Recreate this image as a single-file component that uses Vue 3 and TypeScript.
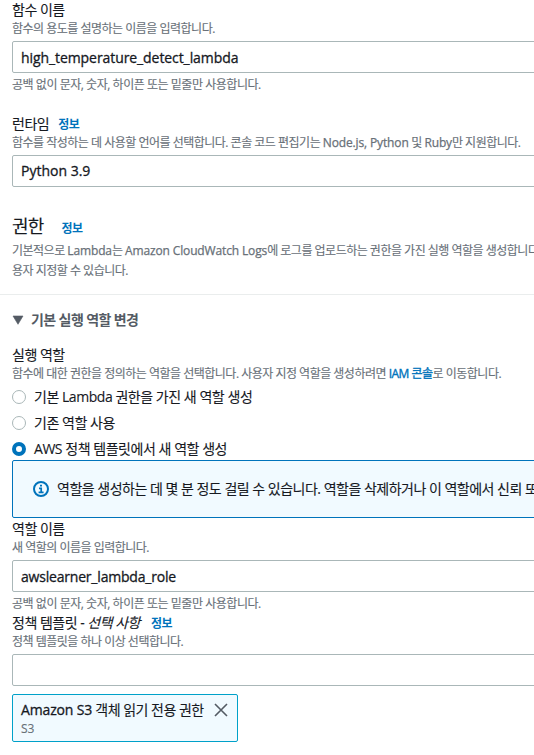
<script setup lang="ts">
import { ref } from 'vue'

interface RoleOption {
  id: string
  label: string
}

const functionName = ref('high_temperature_detect_lambda')
const runtime = ref('Python 3.9')
const roleName = ref('awslearner_lambda_role')
const selectedRole = ref('template')

const roleOptions: RoleOption[] = [
  { id: 'basic', label: '기본 Lambda 권한을 가진 새 역할 생성' },
  { id: 'existing', label: '기존 역할 사용' },
  { id: 'template', label: 'AWS 정책 템플릿에서 새 역할 생성' },
]
</script>

<template>
  <main class="page">
    <div class="form">
      <section class="field">
        <div class="label">함수 이름</div>
        <p class="hint">함수의 용도를 설명하는 이름을 입력합니다.</p>
        <div class="control name">{{ functionName }}</div>
        <p class="hint constraint">공백 없이 문자, 숫자, 하이픈 또는 밑줄만 사용합니다.</p>
      </section>

      <section class="field runtime">
        <div class="label">런타임<a class="info">정보</a></div>
        <p class="hint">함수를 작성하는 데 사용할 언어를 선택합니다. 콘솔 코드 편집기는 <span class="latin">Node.js, Python</span> 및 <span class="latin">Ruby</span>만 지원합니다.</p>
        <div class="control python">{{ runtime }}</div>
      </section>

      <section class="permissions">
        <h2 class="title">권한<a class="info">정보</a></h2>
        <p class="hint tall">기본적으로 <span class="latin">Lambda</span>는 <span class="latin">Amazon CloudWatch Logs</span>에 로그를 업로드하는 권한을 가진 실행 역할을 생성합니다.<br>용자 지정할 수 있습니다.</p>
      </section>

      <div class="expander">
        <svg class="caret" width="12" height="10" viewBox="0 0 12 10"><path d="M1 1h10L6 9.3z" fill="#545b64" stroke="#545b64" stroke-width=".6" stroke-linejoin="round" /></svg>
        <span>기본 실행 역할 변경</span>
      </div>

      <section class="roles">
        <div class="label">실행 역할</div>
        <p class="hint">함수에 대한 권한을 정의하는 역할을 선택합니다. 사용자 지정 역할을 생성하려면 <a class="link">IAM 콘솔</a>로 이동합니다.</p>
        <div class="options">
          <div v-for="o in roleOptions" :key="o.id" class="option" @click="selectedRole = o.id">
            <span class="radio" :class="{ checked: selectedRole === o.id }"></span>
            <span class="option-text" :class="o.id">{{ o.label }}</span>
          </div>
        </div>
      </section>

      <div class="alert">
        <svg class="alert-icon" width="16" height="16" viewBox="0 0 16 16" fill="none" stroke="#0073bb" stroke-width="2">
          <circle cx="8" cy="8" r="7" />
          <path d="M6 7.4h2.2V11.4M5.6 11.4h5M7 4.6h2" stroke-width="1.7" />
        </svg>
        <span>역할을 생성하는 데 몇 분 정도 걸릴 수 있습니다. 역할을 삭제하거나 이 역할에서 신뢰 또는</span>
      </div>

      <section class="field">
        <div class="label">역할 이름</div>
        <p class="hint">새 역할의 이름을 입력합니다.</p>
        <div class="control role">{{ roleName }}</div>
        <p class="hint constraint">공백 없이 문자, 숫자, 하이픈 또는 밑줄만 사용합니다.</p>
      </section>

      <section class="field policy">
        <div class="label">정책 템플릿 - <em>선택 사항</em><a class="info">정보</a></div>
        <p class="hint">정책 템플릿을 하나 이상 선택합니다.</p>
        <div class="control"></div>
      </section>

      <div class="token">
        <div>
          <div class="token-name"><span class="service">Amazon S3</span> 객체 읽기 전용 권한</div>
          <div class="token-tag">S3</div>
        </div>
        <svg class="close" width="14" height="14" viewBox="0 0 14 14"><path d="M1 1l12 12M13 1L1 13" stroke="#545b64" stroke-width="1.6" /></svg>
      </div>
    </div>
  </main>
</template>

<style>
body { margin: 0; background: #fff; }
</style>

<style scoped>
.page {
  box-sizing: border-box;
  width: 100%;
  height: 755px;
  overflow: hidden;
  color: #16191f;
  font: 14px/20px "Open Sans", "Noto Sans CJK KR", sans-serif;
  letter-spacing: -0.5px;
  white-space: nowrap;
  -webkit-text-stroke-width: 0.12px;
}
.form { width: 700px; padding-left: 12px; }
.label { height: 20px; }
.hint { margin: 0; height: 18px; font-size: 12px; line-height: 18px; color: #687078; }
.control {
  box-sizing: border-box;
  height: 32px;
  margin-top: 3px;
  padding: 0 8px;
  border: 1px solid #aab7b8;
  border-radius: 2px;
  line-height: 31px;
  -webkit-text-stroke-width: 0.3px;
}
.constraint { margin-top: 3px; letter-spacing: -0.46px; }
.runtime { margin-top: 20px; }
.latin { letter-spacing: -0.14px; -webkit-text-stroke-width: 0.25px; }
.name { letter-spacing: -0.08px; }
.role { letter-spacing: -0.2px; }
.python { letter-spacing: 0; line-height: 29px; }
.info { margin-left: 9px; font-size: 12px; font-weight: 700; color: #0073bb; -webkit-text-stroke-width: 0; }
.policy .info { margin-left: 11px; }
.permissions { margin-top: 26px; }
.title { margin: 0; height: 28px; font-size: 18px; line-height: 26px; font-weight: 400; letter-spacing: -0.8px; }
.title .info { margin-left: 18px; letter-spacing: -0.5px; }
.tall { height: 40px; line-height: 20px; }
.expander {
  display: flex;
  align-items: center;
  gap: 7px;
  height: 20px;
  margin: 13px 0 15px -12px;
  padding: 15px 0 0 12px;
  border-top: 1px solid #eaeded;
  font-weight: 700;
  letter-spacing: -0.6px;
  color: #545b64;
  -webkit-text-stroke-width: 0;
}
.link { color: #0073bb; -webkit-text-stroke-width: 0.35px; }
.options { display: grid; gap: 6px; padding: 4px 0 1px; }
.option { display: flex; align-items: center; gap: 8px; height: 20px; letter-spacing: -0.46px; }
.radio {
  box-sizing: border-box;
  width: 14px;
  height: 14px;
  border: 1px solid #aab7b8;
  border-radius: 50%;
}
.radio.checked { border: 4.5px solid #0073bb; }
.alert {
  box-sizing: border-box;
  display: flex;
  align-items: center;
  gap: 8px;
  height: 58px;
  margin-bottom: 1px;
  padding-left: 20px;
  border: 1px solid #0073bb;
  border-radius: 2px;
  background: #f1faff;
}
.token {
  box-sizing: border-box;
  display: flex;
  justify-content: space-between;
  width: 226px;
  height: 48px;
  margin-top: 8px;
  padding: 5px 9px 0 8px;
  border: 1px solid #00a1c9;
  border-radius: 2px;
  background: #f1faff;
}
.service { letter-spacing: -0.15px; -webkit-text-stroke-width: 0.3px; }
.token-tag { font-size: 12px; line-height: 18px; letter-spacing: -0.1px; color: #687078; }
.close { margin-top: 3px; }
</style>
